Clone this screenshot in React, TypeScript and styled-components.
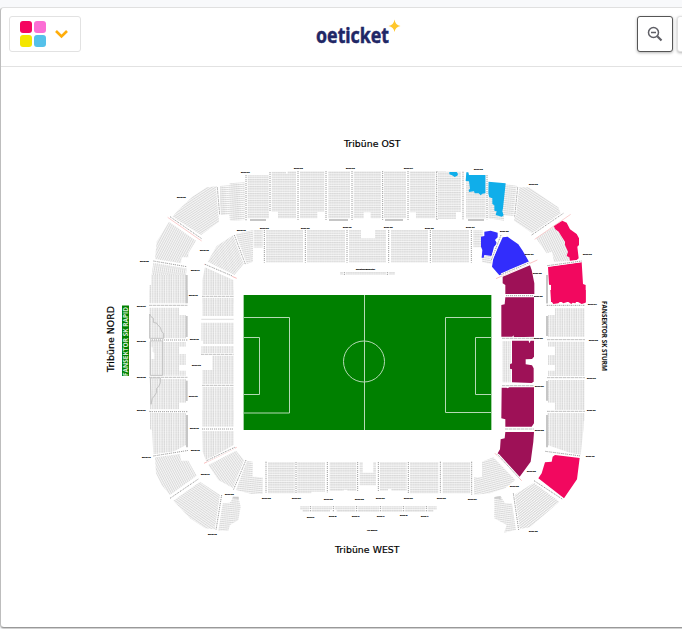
import React from "react";
import styled, { createGlobalStyle } from "styled-components";

const GlobalStyle = createGlobalStyle`
  * {
    box-sizing: border-box;
  }
  body {
    margin: 0;
    background-color: #f8f9fb;
    font-family: "Noto Sans", "Open Sans", sans-serif;
    overflow: hidden;
  }
`;

const Page = styled.div`
  height: 629px;
  padding-top: 7px;
  overflow: hidden;
`;

const Card = styled.main`
  display: flex;
  flex-direction: column;
  width: 690px;
  height: 621px;
  background-color: #fff;
  border: 1px solid #bdbdbd;
  border-top-color: #e0e0e0;
  border-bottom-color: #999;
  border-radius: 4px;
  box-shadow: 0 1px 1px #ccc;
`;

const Header = styled.header`
  display: grid;
  grid-template-columns: 305px 1fr auto;
  height: 59px;
  flex: none;
  padding: 8px 0 0 8px;
  border-bottom: 1px solid #e2e2e2;
`;

const MenuButton = styled.button`
  display: flex;
  align-items: center;
  gap: 8px;
  width: 72px;
  height: 36px;
  padding: 0 10px;
  background-color: #fff;
  border: 1px solid #e2e2e2;
  border-radius: 3px;
`;

const Tiles = styled.span`
  display: grid;
  grid-template-columns: 12px 12px;
  gap: 2px;
`;

const Tile = styled.i<{ $color: string }>`
  height: 12px;
  border-radius: 3px;
  background-color: ${({ $color }) => $color};
`;

const LogoImage = styled.svg`
  display: block;
  overflow: visible;
`;

const LogoText = styled.text`
  font-family: "Noto Sans", sans-serif;
  font-size: 21.5px;
  font-weight: 700;
  fill: #1f2766;
  stroke: #1f2766;
  stroke-width: 0.5px;
`;

const Tools = styled.div`
  display: flex;
  gap: 4px;
  margin-right: -24px;
`;

const ToolButton = styled.button<{ $active?: boolean }>`
  display: flex;
  align-items: center;
  justify-content: center;
  width: 36px;
  height: 36px;
  padding: 0;
  background-color: #fff;
  border: 1px solid ${({ $active }) => ($active ? "#555" : "#e2e2e2")};
  border-radius: 3px;
  box-shadow: 0 1px 3px rgba(0, 0, 0, 0.3);
`;

const MapArea = styled.section`
  flex: 1;
  min-height: 0;
`;

const Plan = styled.svg`
  display: block;
`;

const StandName = styled.text`
  font-family: "DejaVu Sans", sans-serif;
  font-size: 9.3px;
  fill: #000;
  stroke: #000;
  stroke-width: 0.2px;
`;

const SectorName = styled.text`
  font-family: "Open Sans", sans-serif;
  font-size: 6.4px;
  font-weight: 700;
`;

const BlockLabel = styled.text`
  font-family: "Liberation Sans", sans-serif;
  font-size: 6.5px;
  font-weight: 700;
  fill: #111;
  stroke: #111;
  stroke-width: 0.5px;
`;

const CYAN = "#10aeea";
const BLUE = "#322dfc";
const PLUM = "#9e1157";
const PINK = "#f2085f";
const BAR = "#c6c6c6";

// [points, row angle] or [points, fill color]
type Block = [string, number | string];
// [x1, y1, x2, y2, color?]
type Aisle = [number, number, number, number, string?];
type Label = [number, number, string];

interface Region {
  x: number;
  y: number;
  blocks: Block[];
  aisles: Aisle[];
  labels: Label[];
}

const box = (x1: number, y1: number, x2: number, y2: number) =>
  `${x1},${y1} ${x2},${y1} ${x2},${y2} ${x1},${y2}`;

// Every region has its own origin and uses three units per pixel
const regions: Region[] = [
  {
    x: 95,
    y: 160,
    blocks: [
      ["375,78 404,76 404,70 450,67 450,180 405,182 403,165 375,165", -4],
      ["292,110 335,82 365,79 372,185 318,225 232,170 250,150", -33],
      ["222,185 303,242 280,280 280,292 260,292 258,310 180,297 185,245", -62],
      ["175,308 275,325 273,345 170,345", 100],
      ["168,345 273,345 273,430 163,430 163,375 168,375", 90],
      [box(272, 345, 278, 430), BAR],
      ["338,305 365,258 415,225 448,310 418,345", -50],
      ["422,222 474,210 474,305 455,312", -10],
      ["330,322 415,360 416,405 322,405 322,360", 90],
      [box(322, 413, 416, 430), 90],
    ],
    aisles: [
      [453, 45, 453, 182],
      [367, 82, 374, 165],
      [225, 170, 320, 236],
      [218, 172, 320, 243, "#f7b5b5"],
      [175, 303, 275, 320],
      [418, 225, 452, 315],
      [328, 313, 425, 355, "#f59a9a"],
      [330, 313, 412, 348],
      [322, 409, 416, 409],
    ],
    labels: [
      [246, 114, "Block 26"],
      [438, 39, "Block 101"],
      [426, 213, "Block 09"],
      [315, 273, "Block 08"],
      [135, 306, "Block 25"],
      [288, 333, "Block 07"],
      [282, 408, "Block 06"],
    ],
  },
  {
    x: 240,
    y: 130,
    blocks: [
      [box(23, 135, 87, 265), 0],
      ["95,125 138,125 138,131 143,131 143,123 168,123 168,265 114,265 114,245 95,245", 0],
      ["180,123 253,123 253,246 232,246 232,265 180,265", 0],
      [box(265, 123, 330, 265), 0],
      ["341,123 424,123 424,265 392,265 392,247 371,247 371,265 341,265", 0],
      [box(432, 123, 498, 265), 0],
      ["509,123 587,123 587,265 528,265 528,247 509,247", 0],
      [box(594, 123, 618, 265), 0],
      [box(30, 267, 78, 273), BAR],
      [box(267, 267, 324, 273), BAR],
      [box(435, 267, 489, 273), BAR],
      [box(41, 300, 68, 353), 0],
      [box(78, 300, 189, 398), 0],
      [box(201, 300, 315, 398), 0],
      ["327,300 363,300 363,325 405,325 405,300 438,300 438,398 327,398", 0],
      [box(453, 300, 564, 398), 0],
      [box(576, 300, 687, 398), 0],
      [box(300, 426, 465, 435), 0],
    ],
    aisles: [
      [90, 126, 90, 245],
      [174, 123, 174, 270],
      [258, 123, 258, 270],
      [336, 123, 336, 270],
      [428, 123, 428, 270],
      [504, 123, 504, 270],
      [591, 123, 591, 270],
      [73, 300, 73, 398],
      [196, 300, 196, 398],
      [321, 300, 321, 398],
      [446, 300, 446, 398],
      [571, 300, 571, 398],
      [313, 426, 313, 435],
      [442, 426, 442, 435],
    ],
    labels: [
      [162, 117, "Block 102"],
      [318, 117, "Block 103"],
      [492, 117, "Block 104"],
      [60, 297, "Block 109"],
      [183, 297, "Block 110"],
      [309, 294, "Block 111"],
      [432, 294, "Block 112"],
      [555, 297, "Block 113"],
      [348, 420, "Rollstuhl/Begleiter"],
    ],
  },
  {
    x: 430,
    y: 150,
    blocks: [
      ["24,65 93,65 93,186 78,186 78,207 24,207", 0],
      [box(108, 75, 167, 205), 0],
      ["175,95 262,108 254,198 222,196 222,212 175,205", 6],
      ["268,112 297,112 385,172 392,190 310,252 252,212", 33],
      ["318,265 371,230 410,275 420,333 372,335 366,305 350,310", 64],
      [box(114, 207, 162, 213), BAR],
      ["58,66 80,66 84,72 82,77 74,81 66,76 58,73", CYAN],
      ["109,67 115,67 117,75 167,75 167,130 157,131 152,136 146,130 134,130 132,124 117,126 116,119 120,117 117,94 107,93", CYAN],
      ["175,95 227,100 219,175 217,184 221,196 215,200 197,195 200,184 193,182 193,166 187,162 187,145 178,142 174,130", CYAN],
      [box(130, 240, 158, 292), 0],
      ["155,318 188,318 184,342 157,337", 10],
      ["153,260 163,258 163,245 182,242 203,248 203,262 195,270 202,281 192,290 185,318 163,315 161,323 155,323 157,300 153,290", BLUE],
      ["218,262 233,260 243,268 265,283 278,302 297,335 208,376 186,350 190,325 205,290", BLUE],
      ["218,380 300,346 305,360 313,400 313,432 226,432 226,405 218,400", PLUM],
      ["371,228 397,212 410,218 420,238 440,252 447,265 447,285 442,290 446,325 440,330 420,332 418,322 410,318 414,305 405,285 405,275 392,255 386,245 376,238", PINK],
      ["354,350 455,336 459,402 467,405 467,456 363,456 363,405 357,404", PINK],
      [box(348, 375, 354, 460), BAR],
    ],
    aisles: [
      [20, 65, 20, 207],
      [99, 65, 99, 210],
      [171, 75, 171, 208],
      [263, 112, 254, 200],
      [305, 255, 400, 190],
      [314, 268, 422, 193, "#f8b8b8"],
      [124, 240, 124, 338],
      [213, 255, 184, 330],
      [198, 386, 322, 330, "#f8a5a5"],
      [214, 374, 298, 338],
      [352, 347, 455, 333],
      [228, 437, 312, 437],
    ],
    labels: [
      [132, 60, "Block 105"],
      [297, 105, "Block 105"],
      [108, 234, "Block 114"],
      [210, 246, "Block 115"],
      [285, 315, "Block 117"],
      [309, 372, "Block 118"],
      [459, 315, "Block 106"],
      [312, 441, "Block 119"],
    ],
  },
  {
    x: 95,
    y: 290,
    blocks: [
      [box(163, 0, 273, 39), 90],
      [box(272, 0, 278, 39), BAR],
      ["163,53 252,53 252,75 273,75 273,145 163,145", 90],
      [box(272, 78, 278, 141), BAR],
      ["163,156 272,156 272,170 252,170 252,192 272,192 272,225 252,225 252,242 272,242 272,257 163,257", 90],
      ["167,172 173,172 173,186 178,188 178,207 167,207", "#fff"],
      ["165,266 273,266 273,338 252,338 252,358 165,358", 90],
      [box(272, 272, 278, 333), BAR],
      [box(166, 369, 270, 390), 90],
      [box(322, 0, 416, 13), 90],
      [box(322, 23, 416, 78), 90],
      ["319,98 416,98 416,162 324,162 324,152 319,152", 90],
      ["319,168 416,168 416,282 322,282 322,240 352,240 352,195 319,193", 90],
      [box(322, 290, 416, 390), 90],
    ],
    aisles: [
      [163, 46, 278, 46],
      [165, 150, 278, 150],
      [163, 262, 278, 262],
      [163, 364, 278, 364],
      [322, 19, 416, 19],
      [319, 88, 416, 88, "#ccc"],
      [319, 193, 416, 193],
      [322, 286, 416, 286],
    ],
    labels: [
      [126, 50, "Block 24"],
      [126, 155, "Block 23"],
      [126, 263, "Block 22"],
      [126, 362, "Block 21"],
      [285, 150, "Block 05"],
      [291, 228, "Block 04a"],
      [282, 321, "Block 04b"],
    ],
  },
  {
    x: 430,
    y: 290,
    blocks: [
      ["361,0 467,0 467,38 455,42 440,34 436,40 428,38 424,42 414,35 400,40 392,34 385,40 370,42 363,32", PINK],
      [box(348, 0, 354, 40), BAR],
      ["226,22 312,22 312,140 252,142 250,136 247,140 214,140 214,45 224,43", PLUM],
      [box(217, 153, 243, 277), 90],
      ["246,152 296,152 298,160 302,152 312,152 312,200 306,207 287,208 287,223 306,226 311,235 311,275 305,279 246,277 246,238 240,236 240,223 246,220", PLUM],
      ["215,293 230,293 233,295 238,292 312,292 312,400 305,410 226,410 226,388 214,385", PLUM],
      ["375,55 464,55 464,140 354,140 354,75 375,75", 90],
      [box(348, 78, 354, 138), BAR],
      ["354,155 464,155 464,258 354,258 354,242 375,242 375,225 354,225 354,195 375,195 375,170 354,170", 90],
      ["354,270 464,270 464,360 375,360 375,338 354,338", 90],
      [box(348, 273, 354, 332), BAR],
      [box(354, 370, 464, 392), 90],
    ],
    aisles: [
      [228, 17, 312, 17],
      [217, 145, 312, 145],
      [217, 287, 312, 287],
      [350, 46, 465, 46],
      [352, 149, 465, 149],
      [352, 263, 465, 263],
      [352, 364, 465, 364],
    ],
    labels: [
      [474, 45, "Block 107"],
      [477, 153, "Block 108"],
      [471, 267, "Block 109"],
      [471, 363, "Block 110"],
      [312, 147, "Block 120"],
      [315, 291, "Block 121"],
    ],
  },
  {
    x: 130,
    y: 410,
    blocks: [
      [box(216, 0, 311, 50), 90],
      ["216,63 311,63 311,105 228,152 218,125", 90],
      ["235,165 318,122 342,150 310,235 265,210", 55],
      ["350,152 368,155 368,200 398,202 398,252 365,252 318,240", 6],
      ["60,10 168,10 168,105 130,125 70,133 66,60 60,58", 90],
      [box(168, 15, 174, 112), BAR],
      ["75,142 150,132 153,152 175,152 200,197 120,255 95,225 78,190", 62],
      ["210,215 270,255 255,358 225,355 180,325 130,272", 35],
      ["278,280 300,278 310,260 325,262 332,290 325,330 300,345 295,362 265,362", -6],
      ["308,260 326,260 326,267 308,265", "#ccc"],
    ],
    aisles: [
      [60, 5, 174, 5],
      [216, 57, 311, 57],
      [222, 160, 320, 112, "#f5a0a0"],
      [230, 152, 314, 112],
      [348, 150, 310, 240],
      [70, 138, 176, 121],
      [120, 265, 205, 207],
      [275, 255, 258, 360],
      [408, 155, 408, 250],
    ],
    labels: [
      [36, 144, "Block 19"],
      [180, 57, "Block 03"],
      [183, 123, "Block 02"],
      [213, 195, "Block 01"],
      [285, 255, "Block 136"],
      [234, 375, "Block 18"],
      [396, 267, "Block 135"],
    ],
  },
  {
    x: 230,
    y: 440,
    blocks: [
      [box(114, 66, 195, 160), 0],
      ["201,66 285,66 285,155 244,155 244,160 201,160", 0],
      ["299,66 380,66 380,153 352,153 352,149 341,149 341,153 299,153", 0],
      ["389,66 398,66 398,98 430,98 430,66 438,66 438,136 389,136", 0],
      ["450,66 530,66 530,152 484,152 484,147 474,147 474,152 450,152", 0],
      [box(540, 66, 625, 160), 0],
      [box(638, 66, 722, 160), 0],
      [box(210, 198, 620, 210), 0],
      ["218,210 300,210 300,216 218,216", 0],
      [box(320, 210, 610, 216), 0],
    ],
    aisles: [
      [198, 66, 198, 160],
      [292, 66, 292, 157],
      [383, 66, 383, 153],
      [445, 66, 445, 153],
      [535, 66, 535, 160],
      [631, 66, 631, 160],
      [241, 198, 241, 216],
      [310, 198, 310, 216],
      [380, 198, 380, 216],
      [451, 198, 451, 216],
      [520, 198, 520, 216],
      [589, 198, 589, 216],
    ],
    labels: [
      [186, 177, "Block 134"],
      [282, 180, "Block 133"],
      [375, 180, "Block 132"],
      [438, 177, "Block 131"],
      [522, 177, "Block 130"],
      [621, 177, "Block 129"],
      [231, 234, "Block F"],
      [297, 231, "Block E"],
      [366, 231, "Block D"],
      [441, 231, "Block C"],
      [510, 228, "Block B"],
      [573, 231, "Block A"],
      [411, 273, "VIP Balkon"],
    ],
  },
  {
    x: 430,
    y: 410,
    blocks: [
      ["132,202 156,202 156,155 190,142 256,210 225,235 180,250 132,254", -15],
      ["226,66 312,66 310,95 302,155 268,202 203,130 210,118 212,88 224,85", PLUM],
      ["352,10 462,10 460,60 452,135 420,128 352,105", 90],
      [box(348, 15, 354, 112), BAR],
      ["375,135 449,144 441,208 402,265 325,205 335,190 345,157 365,155 368,140", PINK],
      ["312,218 388,275 300,352 268,357 252,255", -38],
      ["193,262 212,258 225,280 246,280 258,360 222,368 230,345 193,325", 8],
      ["193,261 212,258 212,270 206,266 194,266", "#ccc"],
    ],
    aisles: [
      [352, 4, 462, 4],
      [226, 57, 312, 57],
      [31, 155, 31, 250],
      [125, 155, 125, 254],
      [195, 130, 275, 212, "#f29a9a"],
      [203, 134, 268, 205],
      [346, 124, 452, 138],
      [312, 212, 398, 268],
      [250, 250, 266, 360],
    ],
    labels: [
      [315, 63, "Block 122"],
      [291, 186, "Block 123"],
      [240, 231, "Block 125"],
      [468, 141, "Block 111"],
      [114, 270, "Block 127"],
      [297, 366, "Block 112"],
    ],
  },
];

const rowAngles = Array.from(
  new Set(regions.flatMap((r) => r.blocks.map(([, fill]) => fill)))
).filter((fill) => typeof fill === "number");

const labelWidth = (text: string) => {
  if (text.length > 12) return 57;
  if (text.length > 9) return 31;
  return text.length < 8 ? 22 : 26;
};

const SeatRows: React.FC<{ angle: number }> = ({ angle }) => {
  const straight = angle === 0 || angle === 90;
  return (
    <pattern
      id={`rows${angle}`}
      width="7"
      height={straight ? 7 : 6}
      patternUnits="userSpaceOnUse"
      patternTransform={`rotate(${angle})`}
    >
      <rect width="7" height="7" fill={straight ? "#f4f4f4" : "#fbfbfb"} />
      <rect width="7" height="3.5" fill="#d8d8d8" />
      {/* gap between two seats */}
      <rect width="1.5" height="7" fill="#fff" fillOpacity="0.35" />
    </pattern>
  );
};

const RegionSeats: React.FC<{ region: Region }> = ({ region }) => (
  <g transform={`translate(${region.x} ${region.y}) scale(${1 / 3})`}>
    {region.blocks.map(([points, fill], i) => (
      <polygon
        key={i}
        points={points}
        fill={typeof fill === "number" ? `url(#rows${fill})` : fill}
      />
    ))}
    {region.aisles.map(([x1, y1, x2, y2, color], i) => (
      <g key={i}>
        {!color && (
          <line x1={x1} y1={y1} x2={x2} y2={y2} stroke="#fff" strokeWidth="8" />
        )}
        <line
          x1={x1}
          y1={y1}
          x2={x2}
          y2={y2}
          stroke={color || "#a0a0a0"}
          strokeWidth={color ? 2 : 3}
          strokeDasharray={color ? undefined : "4 2 3 3"}
        />
      </g>
    ))}
    {region.labels.map(([x, y, text], i) => (
      <BlockLabel
        key={i}
        x={x}
        y={y}
        textLength={labelWidth(text)}
        lengthAdjust="spacingAndGlyphs"
      >
        {text}
      </BlockLabel>
    ))}
  </g>
);

const Pitch = () => (
  <g fill="none" stroke="#b4dab4">
    <rect x="243.5" y="295" width="248" height="135" fill="#008000" stroke="none" />
    <path d="M243.5 295v135M491.5 295v135" strokeOpacity="0.7" />
    <path d="M364.5 295v135M244 317.5h45.5v95.5H244M244 337.5h15.5v57H244" />
    <path d="M491 317.5h-45.5v95H491M491 337.5h-15.5v57H491" />
    <circle cx="364" cy="361.5" r="20.5" />
  </g>
);

const StadiumPlan = () => (
  <Plan width="681" height="560" viewBox="1 67 681 560">
    <defs>
      {rowAngles.map((angle) => (
        <SeatRows key={angle} angle={angle as number} />
      ))}
    </defs>
    {regions.map((region, i) => (
      <RegionSeats key={i} region={region} />
    ))}
    {/* standing areas of the home fans */}
    <g
      transform={`translate(95 290) scale(${1 / 3})`}
      fill="none"
      stroke="#c2c2c2"
      strokeWidth="3"
    >
      <path d="M164 72v73h42v-15l-6-5-4-13-8-7-2-5-11-3v-12l-7-5zM166 153h37v103h-37zM166 264h30v14l-5 12-6 5v12l-7 11-6 7-4 18z" />
    </g>
    <Pitch />
    <StandName x="344" y="147" textLength="56.5">
      Tribüne OST
    </StandName>
    <StandName x="335" y="553" textLength="64.5">
      Tribüne WEST
    </StandName>
    <StandName transform="translate(113.5 372) rotate(-90)" textLength="66">
      Tribüne NORD
    </StandName>
    <rect x="122" y="305.5" width="7" height="70.5" fill="#008000" />
    <SectorName
      transform="translate(127.8 376) rotate(-90)"
      textLength="69"
      lengthAdjust="spacingAndGlyphs"
      fill="#d5ecd5"
    >
      FANSEKTOR SK RAPID
    </SectorName>
    <SectorName
      transform="translate(602 301) rotate(90)"
      textLength="70"
      lengthAdjust="spacingAndGlyphs"
      fill="#111"
    >
      FANSEKTOR SK STURM
    </SectorName>
  </Plan>
);

const Logo = () => (
  <LogoImage width="94" height="42" viewBox="-2 0 94 42">
    <LogoText x="0" y="27" textLength="73" lengthAdjust="spacingAndGlyphs">
      oeticket
    </LogoText>
    <path
      d="M78.5 3.500q.8 5.700 6 6.500-5.200.8-6 6-.8-5.200-6-6 5.200-.8 6-6.500z"
      fill="#ffc72c"
    />
  </LogoImage>
);

const App: React.FC = () => {
  return (
    <>
      <GlobalStyle />
      <Page>
        <Card>
          <Header>
            <MenuButton aria-label="Menu">
              <Tiles>
                <Tile $color="#f5055f" />
                <Tile $color="#fb6ed4" />
                <Tile $color="#f4e600" />
                <Tile $color="#55c1ea" />
              </Tiles>
              <svg width="15" height="10" viewBox="0 0 15 10">
                <path
                  d="M2 2l5.5 5.5L13 2"
                  fill="none"
                  stroke="#ffad0a"
                  strokeWidth="2.6"
                />
              </svg>
            </MenuButton>
            <Logo />
            <Tools>
              <ToolButton $active aria-label="Zoom out">
                <svg
                  width="16"
                  height="16"
                  viewBox="0 0 16 16"
                  fill="none"
                  stroke="#5f5f66"
                  strokeWidth="1.5"
                >
                  <circle cx="6.5" cy="6.5" r="5" />
                  <path d="M4 6.500h5" />
                  <path d="M10.3 10.3L14.5 14.5" strokeWidth="2.2" />
                </svg>
              </ToolButton>
              <ToolButton aria-label="Zoom in" />
            </Tools>
          </Header>
          <MapArea>
            <StadiumPlan />
          </MapArea>
        </Card>
      </Page>
    </>
  );
};

export default App;
